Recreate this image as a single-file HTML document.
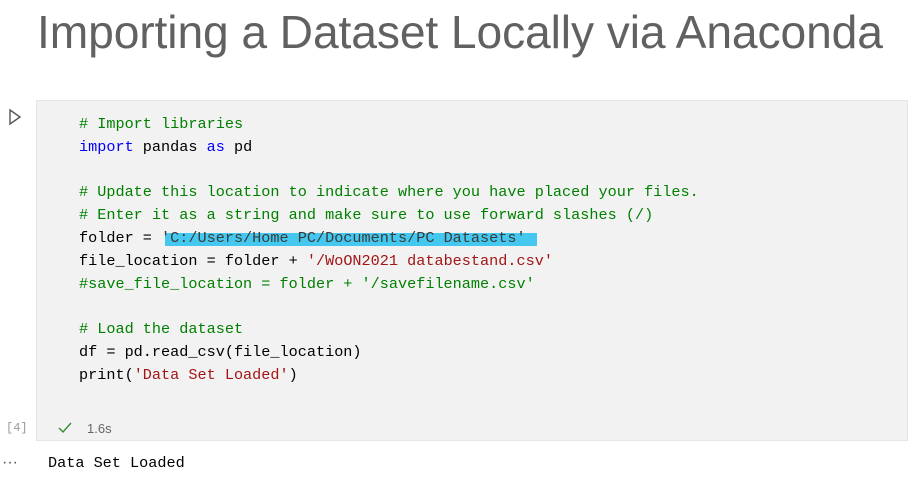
<!DOCTYPE html>
<html><head><style>
body{margin:0;width:908px;height:498px;background:#fff;position:relative;overflow:hidden;font-family:"Liberation Sans",sans-serif}
h1{position:absolute;left:37px;top:5px;margin:0;font-weight:normal;font-size:46.2px;color:#616161;white-space:nowrap;letter-spacing:-0.1px}
.cell{position:absolute;left:36px;top:100px;width:872px;height:341px;background:#f2f2f2;border:1px solid #e5e5e5;box-sizing:border-box}
pre{position:absolute;left:79px;top:113px;margin:0;font-family:"Liberation Mono",monospace;font-size:15.2px;line-height:22.8px;color:#000}
.c{color:#008000}.k{color:#0000ff}.s{color:#a31515}
.hl{position:absolute;left:165px;top:233px;width:372px;height:13px;background:#45c8ef}
.run{position:absolute;left:8px;top:108px}
.cnt{position:absolute;left:6px;top:421px;font-size:12px;color:#999;font-family:"Liberation Mono",monospace}
.chk{position:absolute;left:57px;top:420px}
.t{position:absolute;left:87px;top:421px;font-size:13px;color:#666}
.dots{position:absolute;left:2px;top:454px;font-size:16px;color:#555;letter-spacing:0px}
.out{position:absolute;left:48px;top:454px;font-family:"Liberation Mono",monospace;font-size:15.2px;color:#000}
</style></head><body>
<h1>Importing a Dataset Locally via Anaconda</h1>
<svg class="run" width="14" height="18" viewBox="0 0 14 18"><path d="M2 2 L12 9 L2 16 Z" fill="none" stroke="#555" stroke-width="1.4"/></svg>
<div class="cell"></div>
<div class="hl"></div>
<pre><span class="c"># Import libraries</span>
<span class="k">import</span> pandas <span class="k">as</span> pd

<span class="c"># Update this location to indicate where you have placed your files.</span>
<span class="c"># Enter it as a string and make sure to use forward slashes (/)</span>
folder = <span style="color:#3b3b3b">'C:/Users/Home PC/Documents/PC Datasets'</span>
file_location = folder + <span class="s">'/WoON2021 databestand.csv'</span>
<span class="c">#save_file_location = folder + '/savefilename.csv'</span>

<span class="c"># Load the dataset</span>
df = pd.read_csv(file_location)
print(<span class="s">'Data Set Loaded'</span>)</pre>
<div class="cnt">[4]</div>
<svg class="chk" width="16" height="16" viewBox="0 0 16 16"><path d="M2 8 L6 12 L14 3" fill="none" stroke="#388a34" stroke-width="1.4"/></svg>
<div class="t">1.6s</div>
<div class="dots">···</div>
<div class="out">Data Set Loaded</div>
</body></html>
